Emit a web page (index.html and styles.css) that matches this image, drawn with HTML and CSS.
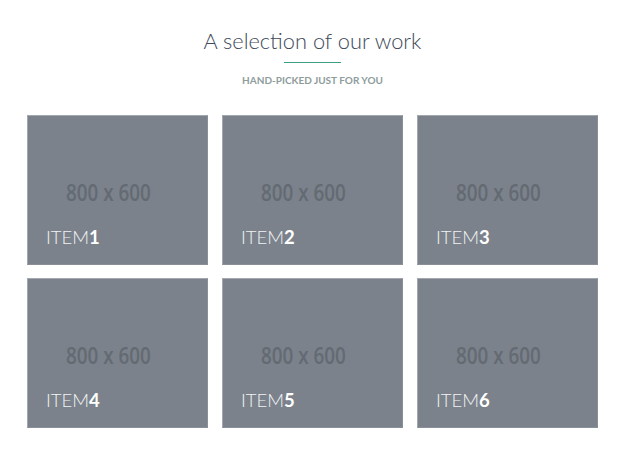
FILE: index.html
```html
<!DOCTYPE html>
<html>
<head>
<meta charset="utf-8">
<link rel="stylesheet" href="styles.css">
</head>
<body>
<section class="work">
  <header class="work-head">
    <h1 class="work-title">A selection of our work</h1>
    <div class="work-rule"></div>
    <p class="work-sub">HAND-PICKED JUST FOR YOU</p>
  </header>
  <div class="grid">
    <div class="card"><span class="ph">800 x 600</span><span class="label">ITEM<b>1</b></span></div>
    <div class="card"><span class="ph">800 x 600</span><span class="label">ITEM<b>2</b></span></div>
    <div class="card"><span class="ph">800 x 600</span><span class="label">ITEM<b>3</b></span></div>
    <div class="card"><span class="ph">800 x 600</span><span class="label">ITEM<b>4</b></span></div>
    <div class="card"><span class="ph">800 x 600</span><span class="label">ITEM<b>5</b></span></div>
    <div class="card"><span class="ph">800 x 600</span><span class="label">ITEM<b>6</b></span></div>
  </div>
</section>
</body>
</html>
```
FILE: styles.css
```css
html, body {
  margin: 0;
  padding: 0;
  background: #ffffff;
}
body {
  font-family: Lato, "Open Sans", sans-serif;
}
.work {
  width: 625px;
  padding-top: 26px;
  box-sizing: border-box;
}
.work-head {
  display: flex;
  flex-direction: column;
  align-items: center;
}
.work-title {
  margin: 0;
  font-weight: 300;
  font-size: 21.8px;
  line-height: 30px;
  color: #3d4858;
}
.work-rule {
  margin-top: 6px;
  width: 57px;
  height: 1px;
  background: #3a9e86;
}
.work-sub {
  margin: 11px 0 0;
  font-size: 10px;
  font-weight: 700;
  line-height: 12px;
  color: #8e9c9c;
}
.grid {
  margin: 29px 0 0 27px;
  display: grid;
  grid-template-columns: repeat(3, 181px);
  grid-auto-rows: 150px;
  column-gap: 14px;
  row-gap: 13px;
}
.card {
  background: #7b828b;
  border: 1px solid #a3a8ae;
  border-right-color: #8a9098;
  border-bottom-color: #8a9098;
  box-sizing: border-box;
  display: flex;
  flex-direction: column;
  align-items: flex-start;
  padding: 63px 0 0 18px;
}
.ph {
  margin-left: 20px;
  font-family: "Open Sans", sans-serif;
  font-weight: 600;
  font-size: 24px;
  line-height: 26px;
  color: #646a72;
  transform: scaleX(0.785);
  transform-origin: left center;
  white-space: nowrap;
}
.label {
  margin-top: 21px;
  font-size: 18.5px;
  font-weight: 300;
  line-height: 22px;
  color: #f1f2f4;
}
.label b {
  font-weight: 700;
  color: #ffffff;
}
```
